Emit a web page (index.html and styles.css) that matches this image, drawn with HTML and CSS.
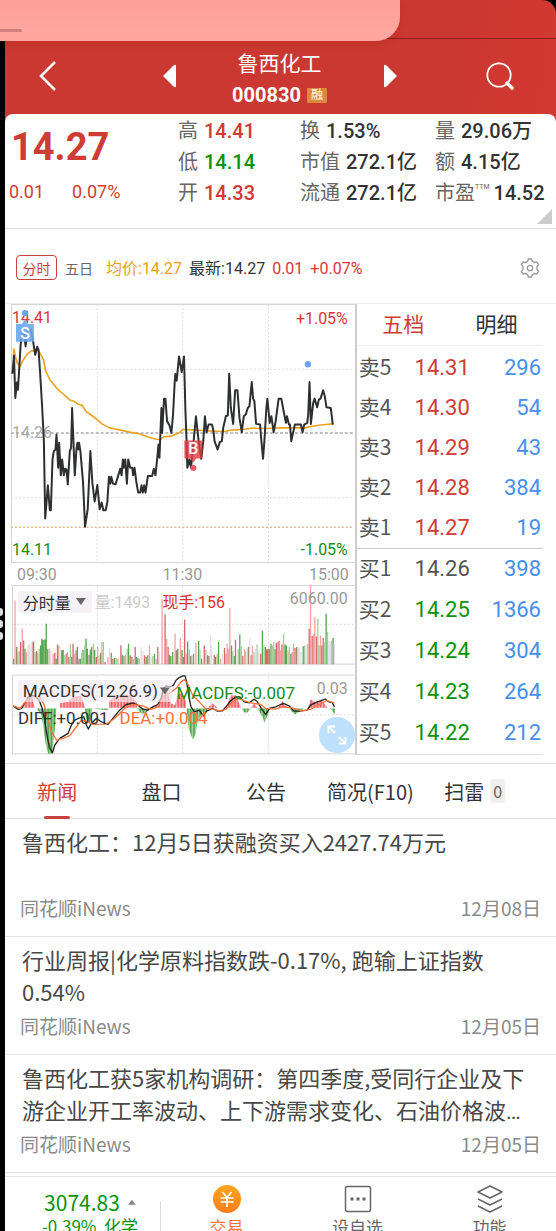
FILE: index.html
```html
<!DOCTYPE html>
<html lang="zh-CN">
<head>
<meta charset="utf-8">
<meta name="viewport" content="width=device-width, initial-scale=1">
<title>鲁西化工 000830</title>
<link rel="stylesheet" href="styles.css">
</head>
<body>
<div class="float-panel"><span class="grip"></span></div>
<div class="edge-handle"><i></i><i></i><i></i></div>
<div class="app">
  <header class="header">
    <button class="icon-btn" aria-label="返回"><svg width="18" height="30" viewBox="0 0 18 30"><path d="M16 1 2 15l14 14" fill="none" stroke="#fff" stroke-width="2.5"/></svg></button>
    <div class="switcher">
      <button class="icon-btn" aria-label="上一只"><svg width="14" height="22" viewBox="0 0 14 22"><path d="M13 0v22h-2L0 11 11 0z" fill="#fff"/></svg></button>
      <div class="heading">
        <h1>鲁西化工</h1>
        <div class="code">000830<span class="tag">融</span></div>
      </div>
      <button class="icon-btn" aria-label="下一只"><svg width="14" height="22" viewBox="0 0 14 22"><path d="M1 0v22h2l11-11L3 0z" fill="#fff"/></svg></button>
    </div>
    <button class="icon-btn" aria-label="搜索"><svg width="28" height="28" viewBox="0 0 28 28" fill="none" stroke="#fff"><circle cx="13" cy="13" r="11.7" stroke-width="1.8"/><path d="m21 21 5 5" stroke-width="3.4" stroke-linecap="round"/></svg></button>
  </header>

  <main class="card">
    <section class="quote">
      <div class="price">
        <strong>14.27</strong>
        <div class="change"><span>0.01</span><span>0.07%</span></div>
      </div>
      <dl class="stats">
        <div><dt>高</dt><dd class="red">14.41</dd></div>
        <div><dt>换</dt><dd>1.53%</dd></div>
        <div><dt>量</dt><dd>29.06万</dd></div>
        <div><dt>低</dt><dd class="green">14.14</dd></div>
        <div><dt>市值</dt><dd>272.1亿</dd></div>
        <div><dt>额</dt><dd>4.15亿</dd></div>
        <div><dt>开</dt><dd class="red">14.33</dd></div>
        <div><dt>流通</dt><dd>272.1亿</dd></div>
        <div><dt>市盈<sup>TTM</sup></dt><dd>14.52</dd></div>
      </dl>
      <span class="corner"></span>
    </section>

    <section class="toolbar">
      <button class="period active">分时</button>
      <button class="period">五日</button>
      <p class="legend"><span class="avg">均价:14.27</span><span>最新:14.27</span><span class="bright">0.01</span><span class="bright">+0.07%</span></p>
      <button class="icon-btn gear" aria-label="设置"><svg width="20" height="20" viewBox="0 0 20 20" fill="none" stroke="#999" stroke-width="1.3" stroke-linejoin="round"><path d="M8.3 1h3.4l.6 2.4 2 1.2 2.5-.8 1.8 2.9-1.6 2v2.6l1.6 2-1.8 2.9-2.5-.8-2 1.2-.6 2.4H8.3l-.6-2.4-2-1.2-2.5.8-1.8-2.9 1.6-2V8.700l-1.600-2 1.800-2.900 2.500.8 2-1.200z"/><circle cx="10" cy="10" r="2.700"/></svg></button>
    </section>

    <section class="market">
      <div class="chart">
        <svg viewBox="0 0 345 453" role="img" aria-label="分时走势">
          <defs>
            <pattern id="red-bars" width="4.400" height="10" patternUnits="userSpaceOnUse"><rect width="3.200" height="10" fill="#f4555c"/></pattern>
            <pattern id="green-bars" width="4.400" height="10" patternUnits="userSpaceOnUse"><rect width="3.200" height="10" fill="#43a33f"/></pattern>
          </defs>
          <g class="frame"><path d="M.5 259.500V.5H345M.5 259.500H345M1.500 282.500H345M1.500 282.500V361.500H345M1.500 372.500H345M1.500 372.500V451.500H345"/></g>
          <g class="grid"><path d="M86.500 0V259M172.500 0V259M258.500 0V259M0 65.500H344M0 194.500H344M86.500 283V361M172.500 283V361M258.500 283V361M2 321.500H344M86.500 373V451M172.500 373V451M258.500 373V451M2 412.500H344"/></g>
          <path class="mid" d="M0 129.500H344"/>
          <path class="low" d="M0 224H344"/>
          <g class="axis">
            <text class="up" x="1" y="19">14.41</text><text class="up" x="338" y="20" text-anchor="end">+1.05%</text>
            <text x="1" y="135" class="faint">14.26</text>
            <text class="down" x="1" y="252">14.11</text><text class="down" x="338" y="252" text-anchor="end">-1.05%</text>
            <text x="6" y="277">09:30</text><text x="172" y="277" text-anchor="middle">11:30</text><text x="339" y="277" text-anchor="end">15:00</text>
          </g>
          <circle cx="14" cy="9" r="3" fill="#6aa2ec"/>
          <g transform="translate(-11 -9) scale(.33333)">
            <polyline class="avg-line" points="40,190 42,163 46,185 52,205 60,215 70,195 82,178 95,168 105,168 113,165 122,178 131,195 137,228 150,255 170,280 190,298 210,316 222,320 235,328 248,333 260,352 275,362 293,375 307,388 330,400 360,406 390,413 415,417 440,425 460,432 482,436 492,427 515,425 540,415 550,405 580,406 610,408 640,410 680,411 692,407 730,405 760,401 800,402 850,400 920,400 930,397 960,392 980,390 1003,388"/>
            <polyline class="price-line" points="37,237 42,183 46,310 51,263 54,285 62,150 68,100 73,120 77,155 82,108 88,104 93,104 98,130 106,180 112,156 116,165 121,240 127,340 132,440 136,673 144,573 150,648 153,648 158,495 162,470 167,465 170,420 175,520 178,445 183,543 187,495 192,543 196,523 200,525 204,570 210,470 214,460 217,340 221,440 225,543 230,465 233,445 236,465 238,445 242,470 250,565 256,698 264,645 272,470 278,565 285,622 293,572 300,645 306,625 311,648 318,648 323,625 328,547 332,568 335,547 340,568 348,570 356,543 362,523 366,543 370,495 373,520 377,495 382,568 386,495 392,520 398,520 401,543 405,520 410,560 416,595 422,595 426,573 430,595 434,573 438,595 445,545 458,545 463,523 468,543 474,485 477,450 480,490 486,340 488,415 494,312 498,312 503,380 510,392 516,415 521,360 526,262 528,238 532,258 539,185 547,232 554,185 558,340 562,450 564,520 570,495 575,520 582,450 590,365 598,440 606,493 612,440 617,365 622,413 628,390 638,390 642,405 646,440 655,465 662,443 668,440 672,400 680,365 686,362 690,237 695,340 702,388 708,287 715,287 721,370 728,413 734,365 740,360 746,340 751,335 758,262 762,312 766,320 771,388 783,390 787,440 792,493 796,440 802,340 805,312 812,385 817,365 824,413 830,380 839,312 847,312 854,350 861,385 864,365 870,390 873,390 877,440 883,412 888,390 906,390 911,413 916,390 925,385 928,360 932,262 936,388 943,325 947,312 955,338 960,315 965,312 973,287 978,305 983,338 996,340 1002,390"/>
          </g>
          <path d="M5 20h6l3-5 3 5h6v18H5z" fill="#6aa8f0" fill-opacity=".9"/>
          <text class="mark" x="14" y="35" text-anchor="middle">S</text>
          <path d="M174 137h18v18h-6l-3 4-3-4h-6z" fill="#e33b40" fill-opacity=".82"/>
          <text class="mark" x="183" y="151" text-anchor="middle">B</text>
          <circle cx="183" cy="164.500" r="3" fill="#e9555b"/>
          <circle cx="298" cy="60.500" r="3.200" fill="#6aa2ec"/>

          <g class="vol" transform="translate(-11 276) scale(.33333)">
            <path stroke="#d9666b" d="M41 257V240M62 257V190M71 257V185M165 257V222M199 257V225M220 257V195M238 257V240M276 257V205M290 257V235M316 257V250M340 257V240M364 257V200M392 257V230M407 257V205M435 257V230M475 257V205M497 257V107M506 257V205M556 257V122M615 257V200M625 257V230M676 257V208M709 257V183M731 257V232M756 257V230M785 257V225M803 257V212M807 257V212M832 257V192M840 257V187M849 257V197M888 257V208M931 257V150M940 257V172M953 257V173M973 257V178"/>
            <path stroke="#f3a3a6" d="M45 257V65M58 257V217M67 257V150M80 257V220M97 257V190M114 257V222M160 257V225M177 257V200M203 257V220M225 257V225M294 257V205M311 257V190M325 257V235M355 257V240M378 257V228M420 257V240M450 257V200M470 257V240M488 257V60M502 257V180M527 257V165M543 257V178M561 257V225M590 257V192M654 257V225M664 257V240M680 257V225M684 257V195M688 257V210M692 257V87M736 257V212M760 257V200M836 257V190M845 257V215M867 257V215M880 257V220M884 257V195M927 257V195M935 257V18M944 257V165M948 257V115M965 257V170"/>
            <path stroke="#55a852" d="M75 257V210M101 257V188M122 257V200M126 257V180M130 257V184M135 257V182M139 257V135M169 257V240M186 257V215M190 257V213M216 257V235M233 257V205M242 257V240M250 257V213M259 257V180M263 257V210M272 257V213M285 257V213M345 257V238M368 257V228M387 257V195M411 257V235M440 257V235M465 257V225M514 257V232M520 257V220M535 257V210M548 257V215M565 257V188M598 257V187M607 257V240M649 257V235M658 257V190M697 257V200M705 257V232M722 257V167M790 257V155M799 257V205M816 257V195M828 257V212M858 257V197M862 257V200M876 257V225M913 257V203M982 257V105M1003 257V178"/>
            <path stroke="#a5cf9c" d="M54 257V220M106 257V220M118 257V210M148 257V210M195 257V230M212 257V195M246 257V222M255 257V200M281 257V195M298 257V230M307 257V190M350 257V238M383 257V210M402 257V240M460 257V232M570 257V213M578 257V230M602 257V213M620 257V213M701 257V218M718 257V210M727 257V203M740 257V218M765 257V220M774 257V197M795 257V200M820 257V200M824 257V190M854 257V165M871 257V205M917 257V200M957 257V120M961 257V200M978 257V190M986 257V160M998 257V185"/>
            <path stroke="#e2e0e2" d="M84 257V200M88 257V195M93 257V200M153 257V215M181 257V213M330 257V207M425 257V205M430 257V218M455 257V235M480 257V218M594 257V228M633 257V170M637 257V200M670 257V225M714 257V215M744 257V210M752 257V178M769 257V212M779 257V215M897 257V205M901 257V208M906 257V220M922 257V200M990 257V185M994 257V190M1007 257V195"/>
            <path stroke="#a5886a" d="M50 257V205M110 257V217M143 257V212M173 257V197M207 257V235M229 257V215M268 257V228M303 257V222M335 257V222M373 257V232M397 257V235M415 257V238M445 257V230M510 257V228M531 257V215M552 257V235M574 257V232M583 257V225M629 257V232M645 257V228M748 257V205M811 257V210M893 257V205M969 257V200"/>
          </g>

          <g transform="translate(-11 276) scale(.33333)">
            <path fill="url(#red-bars)" d="M68 388 80 362 95 350 105 388ZM180 388V374L205 370 220 354 245 352 256 388ZM328 388V370L345 352 370 350 395 350 412 372V388ZM455 388 475 378 490 345 502 335 515 375 527 380 535 345 548 345 560 370V388ZM625 388 640 375 655 388ZM680 388 695 350 710 352 726 388ZM755 388 765 375 775 388ZM838 388 850 368 866 388ZM928 388 935 362 950 372 970 366 986 388Z"/>
            <path fill="url(#green-bars)" d="M110 390 125 410 137 495 145 526 157 526 165 450 170 390ZM255 390 262 432 272 430 277 390ZM280 390 300 393 325 395V390ZM412 390 425 405 440 404 450 390ZM562 390 568 450 580 484 588 470 595 430 610 400 618 408 625 390ZM728 390 735 402 745 402 755 390ZM775 390 790 415 797 433 810 400V390ZM870 390 888 408 905 397 915 390ZM992 390 1000 395 1008 410 1010 390Z"/>
            <polyline class="diff-line" points="40,383 55,393 65,390 75,372 85,355 95,350 105,352 118,365 127,390 135,430 143,480 150,510 158,523 165,500 180,480 205,465 215,440 225,425 240,418 252,415 260,440 266,452 275,435 290,420 305,430 325,438 340,420 360,395 380,378 400,374 415,380 430,392 445,395 460,385 475,378 485,360 492,330 500,322 512,325 522,320 530,305 540,297 550,292 557,292 562,310 568,350 575,385 585,400 592,398 600,395 612,412 622,398 640,390 655,398 670,397 680,385 692,370 700,362 712,355 722,355 735,370 750,373 765,362 775,370 788,392 800,408 812,390 830,385 845,378 855,375 870,382 885,398 900,398 925,395 935,380 955,370 980,362 990,370 1000,372 1007,385"/>
            <polyline class="dea-line" points="40,382 60,390 80,365 95,355 120,355 133,380 143,420 155,460 170,485 190,480 210,472 230,445 245,425 262,430 280,438 320,437 345,420 375,390 400,378 430,382 455,393 475,385 490,360 510,345 530,330 545,310 555,303 565,315 580,350 600,370 618,390 640,392 660,397 680,393 700,370 720,360 750,372 785,378 800,390 830,392 850,385 880,388 910,397 935,393 960,378 985,366 1007,374"/>
          </g>
          <g class="axis">
            <text x="84" y="305" class="light">量:1493</text>
            <text x="152" y="305" class="up">现手:156</text>
            <text x="338" y="301" text-anchor="end">6060.00</text>
            <text x="166" y="396" class="down wide">MACDFS:-0.007</text>
            <text x="338" y="391" text-anchor="end">0.03</text>
            <text x="7" y="422" class="dark wide">DIFF:+0.001</text>
            <text x="109" y="422" class="orange wide">DEA:+0.004</text>
          </g>
        </svg>
        <button class="indicator volume">分时量<span class="caret"></span></button>
        <button class="indicator macd">MACDFS(12,26.9)<span class="caret"></span></button>
        <button class="expand" aria-label="全屏"><svg width="20" height="20" viewBox="0 0 20 20" fill="none" stroke="#fff" stroke-width="1.800"><path d="M8 8 2 2M1.500 8V1.500H8M12 12l6 6M12 18.500h6.500V12"/></svg></button>
      </div>

      <div class="book">
        <nav class="book-tabs"><button class="on">五档</button><button>明细</button></nav>
        <table>
          <tbody class="sell">
            <tr><th scope="row">卖5</th><td>14.31</td><td>296</td></tr>
            <tr><th scope="row">卖4</th><td>14.30</td><td>54</td></tr>
            <tr><th scope="row">卖3</th><td>14.29</td><td>43</td></tr>
            <tr><th scope="row">卖2</th><td>14.28</td><td>384</td></tr>
            <tr><th scope="row">卖1</th><td>14.27</td><td>19</td></tr>
          </tbody>
          <tbody class="buy">
            <tr><th scope="row">买1</th><td class="flat">14.26</td><td>398</td></tr>
            <tr><th scope="row">买2</th><td>14.25</td><td>1366</td></tr>
            <tr><th scope="row">买3</th><td>14.24</td><td>304</td></tr>
            <tr><th scope="row">买4</th><td>14.23</td><td>264</td></tr>
            <tr><th scope="row">买5</th><td>14.22</td><td>212</td></tr>
          </tbody>
        </table>
      </div>
    </section>

    <nav class="tabs">
      <a href="#news" class="current">新闻</a>
      <a href="#board">盘口</a>
      <a href="#notice">公告</a>
      <a href="#f10">简况(F10)</a>
      <a href="#risk">扫雷<span class="count">0</span></a>
    </nav>

    <section class="news" id="news">
      <article><h2>鲁西化工：12月5日获融资买入2427.74万元</h2><footer><span>同花顺iNews</span><time>12月08日</time></footer></article>
      <article><h2>行业周报|化学原料指数跌-0.17%, 跑输上证指数0.54%</h2><footer><span>同花顺iNews</span><time>12月05日</time></footer></article>
      <article><h2>鲁西化工获5家机构调研：第四季度,受同行企业及下游企业开工率波动、上下游需求变化、石油价格波<span class="more">…</span></h2><footer><span>同花顺iNews</span><time>12月05日</time></footer></article>
    </section>
  </main>

  <nav class="bottom">
    <button class="index"><span class="index-value">3074.83<i></i></span><span class="index-sub">-0.39%&nbsp; 化学</span></button>
    <button class="action trade"><svg width="28" height="28" viewBox="0 0 28 28"><defs><linearGradient id="coin" x2="0" y2="1"><stop stop-color="#ffa61f"/><stop offset="1" stop-color="#fb7d1c"/></linearGradient></defs><circle cx="14" cy="14" r="14" fill="url(#coin)"/><path d="m9.500 7 4.500 5.500L18.500 7M7.500 13h13M7.500 17h13M14 13v9" fill="none" stroke="#fff" stroke-width="1.700"/></svg>交易</button>
    <button class="action"><svg width="28" height="28" viewBox="0 0 28 28"><rect x="1.500" y="1.500" width="25" height="25" rx="2" fill="none" stroke="#666" stroke-width="1.500"/><path d="M6.500 12.500h3v3h-3zM12.500 12.500h3v3h-3zM18.500 12.500h3v3h-3z" fill="#666"/></svg>设自选</button>
    <button class="action"><svg width="28" height="28" viewBox="0 0 28 28" fill="none" stroke="#666" stroke-width="1.500" stroke-linejoin="round"><path d="m14 1 12 6-12 6L2 7zM2 14l12 6 12-6M2 21l12 6 12-6"/></svg>功能</button>
  </nav>
</div>
</body>
</html>
```
FILE: styles.css
```css
* { box-sizing: border-box; }
html { height: 100%; }
body {
  margin: 0;
  height: 100%;
  overflow: hidden;
  background: #000;
  color: #333;
  font-family: Roboto, "Noto Sans CJK SC", sans-serif;
}
button {
  padding: 0;
  border: 0;
  background: none;
  color: inherit;
  font: inherit;
  cursor: pointer;
}
svg { display: block; }
h1, h2, p, dl, dd { margin: 0; font-weight: 400; }

.app {
  min-height: 100%;
  margin-left: 5px;
  background: linear-gradient(100deg, #cb3831 0 60%, #d73a32 85%) #d03831;
  border-top-right-radius: 14px;
}

/* Floating layers over the page */
.float-panel {
  position: absolute;
  top: 0;
  left: 0;
  width: 72%;
  height: 41px;
  background: linear-gradient(#ff9f97, #ffa89f);
  border-bottom-right-radius: 24px;
  box-shadow: 0 2px 8px rgba(120, 20, 16, .15);
}
.grip {
  position: absolute;
  left: 0;
  bottom: 9px;
  width: 22px;
  height: 3px;
  border-radius: 0 2px 2px 0;
  background: #d0817b;
}
.edge-handle {
  position: absolute;
  left: 0;
  top: 608px;
  display: grid;
  gap: 4px;
}
.edge-handle i {
  width: 3px;
  height: 8px;
  border-radius: 0 4px 4px 0;
  background: #ddd;
}

.header {
  display: flex;
  align-items: center;
  justify-content: space-between;
  height: 114px;
  padding: 38px 42px 0 34px;
  color: #fff;
  background: linear-gradient(#8e1d18, #8e1d18) 0 38px / 100% 1px no-repeat;
}
.icon-btn { display: block; }
.switcher {
  display: flex;
  align-items: center;
  justify-content: space-between;
  width: 234px;
  margin-left: 16px;
}
.heading { padding-top: 8px; text-align: center; }
.heading h1 { font-size: 21px; line-height: 30px; }
.code {
  display: flex;
  align-items: center;
  gap: 6px;
  font-size: 20px;
  line-height: 32px;
  font-weight: 700;
}
.tag {
  padding: 0 4px;
  background: #dd8744;
  border-radius: 1px;
  font-size: 12px;
  line-height: 15px;
  font-weight: 400;
}

.card {
  border-radius: 8px 8px 0 0;
  background: #fff;
}

.quote {
  position: relative;
  display: flex;
  height: 115px;
  padding-top: 2px;
  border-bottom: 1px solid #e2e2e2;
}
.price { width: 173px; color: #cf3c36; }
.price strong {
  display: block;
  padding: 4px 0 0 6px;
  font-size: 38px;
  line-height: 54px;
  font-weight: 700;
}
.change {
  display: flex;
  gap: 28px;
  padding-left: 4px;
  font-size: 18px;
  line-height: 36px;
}
.stats {
  flex: 1;
  display: grid;
  grid-template-columns: 122fr 135fr 121fr;
  grid-auto-rows: 31px;
  font-size: 20px;
  line-height: 30px;
  white-space: nowrap;
}
.stats div { display: flex; gap: 6px; }
.stats dt { color: #666; }
.stats dd { font-weight: 500; }
.stats div:last-child { gap: 4px; }
.stats sup { font-size: 7px; line-height: 8px; vertical-align: 11px; }
.red { color: #cf3c36; }
.green { color: #0b930b; }
.corner {
  position: absolute;
  right: 4px;
  bottom: 4px;
  width: 15px;
  height: 15px;
  background: #ccc;
  clip-path: polygon(100% 0, 100% 100%, 0 100%);
}

.toolbar {
  display: flex;
  align-items: center;
  height: 75px;
  padding: 3px 16px 0 11px;
  border-bottom: 1px solid #eee;
}
.period { margin-right: 13px; font-size: 14px; color: #666; }
.period.active {
  width: 41px;
  height: 25px;
  margin-right: 8px;
  border: 1px solid #c9413c;
  border-radius: 4px;
  color: #c9413c;
}
.legend {
  display: flex;
  gap: 7px;
  padding-top: 3px;
  font-size: 16px;
  line-height: 24px;
  white-space: nowrap;
}
.legend .avg { color: #e9a116; }
.legend .bright { color: #dc3436; }
.gear { margin-left: auto; }

.market {
  display: flex;
  padding: 0 13px 8px 6px;
  border-bottom: 1px solid #ddd;
}
.chart {
  position: relative;
  flex: 345;
  border-right: 2px solid #ccc;
}
.chart > svg { width: 100%; }
.frame { fill: none; stroke: #d4d4d4; }
.grid { fill: none; stroke: #ddd; stroke-dasharray: 2 2; }
.mid { stroke: #aaa; stroke-width: 1.5; stroke-dasharray: 3 2; }
.low { stroke: #dfba8b; stroke-width: 1.5; stroke-dasharray: 2 2; }
.axis { font-size: 16px; fill: #999; }
.axis .wide { font-size: 17px; }
.axis .up { fill: #d93338; }
.axis .down { fill: #168b16; }
.axis .faint { fill: #aaa; }
.axis .light { fill: #ccc; }
.axis .dark { fill: #333; }
.axis .orange { fill: #f4743b; }
.mark { font-size: 16px; fill: #fff; font-weight: 500; }
.price-line, .avg-line, .diff-line, .dea-line { fill: none; stroke-width: 6; stroke-linejoin: round; }
.price-line { stroke: #2d2f30; }
.avg-line { stroke: #e9a421; stroke-width: 5; }
.diff-line { stroke: #222; stroke-width: 4; }
.dea-line { stroke: #f4743b; stroke-width: 4; }
.vol { fill: none; stroke-width: 4; }
.indicator {
  position: absolute;
  left: 2%;
  display: flex;
  align-items: center;
  gap: 5px;
  height: 22px;
  padding: 0 6px 0 5px;
  border-radius: 2px;
  background: rgba(240, 235, 243, .65);
  font-size: 16px;
  white-space: nowrap;
}
.volume { top: 63.5%; }
.macd { top: 83.3%; gap: 2px; padding-right: 2px; font-size: 17px; }
.caret {
  width: 10px;
  height: 7px;
  background: #666;
  clip-path: polygon(0 0, 100% 0, 50% 100%);
}
.expand {
  position: absolute;
  right: 0;
  bottom: 2px;
  display: grid;
  place-items: center;
  width: 36px;
  height: 36px;
  border-radius: 50%;
  background: #bfe1fe;
}

.book { flex: 187; border-bottom: 1px solid #ddd; }
.book-tabs {
  display: grid;
  grid-template-columns: 1fr 1fr;
  height: 42px;
  padding-bottom: 4px;
  border-bottom: 1px solid #eee;
  font-size: 21px;
}
.book-tabs .on { color: #cf3c36; }
.book table {
  width: 100%;
  margin-top: 2px;
  border-collapse: collapse;
  font-size: 22px;
  line-height: 30px;
}
.book tr { height: 41px; }
.sell tr { height: 40px; }
.book th, .book td { padding: 0 2px; font-weight: 400; text-align: left; }
.book th {
  width: 30%;
  padding-bottom: 4px;
  color: #555;
  font-family: "Noto Sans CJK SC", sans-serif;
  font-size: 21px;
}
.sell td { color: #cf3c36; }
.buy { border-top: 1px solid #ccc; }
.buy td { color: #0b930b; }
.buy .flat { color: #555; }
.book td:last-child { color: #468fee; text-align: right; }

.tabs {
  display: grid;
  grid-template-columns: repeat(5, 1fr);
  height: 55px;
  padding-right: 29px;
  border-bottom: 1px solid #ddd;
  font-family: "Noto Sans CJK SC", sans-serif;
  font-size: 20px;
}
.tabs a {
  position: relative;
  display: flex;
  align-items: center;
  justify-content: center;
  color: #333;
  text-decoration: none;
  white-space: nowrap;
}
.tabs .current { color: #cf3c36; }
.tabs .current::after {
  content: "";
  position: absolute;
  bottom: -1px;
  width: 26px;
  height: 3px;
  border-radius: 2px;
  background: #c9413c;
}
.count {
  margin-left: 6px;
  padding: 0 3px;
  border-radius: 3px;
  background: #efefef;
  color: #666;
  font-size: 16px;
  line-height: 24px;
}

.news { font-family: "Noto Sans CJK SC", sans-serif; }
.news article {
  padding: 6px 15px 9px;
  border-bottom: 1px solid #e4e4e4;
}
.news h2 {
  min-height: 64px;
  padding: 0 12px 0 2px;
  color: #484848;
  font-size: 22px;
  line-height: 32px;
}
.more { font-family: Roboto, sans-serif; line-height: 1; }
.news footer {
  display: flex;
  justify-content: space-between;
  color: #8a8a8a;
  font-size: 19px;
  line-height: 38px;
}

.bottom {
  display: grid;
  grid-template-columns: 156fr 131fr 131fr 133fr;
  padding-top: 3px;
  background: #fff;
  font-family: "Noto Sans CJK SC", sans-serif;
}
.bottom button {
  border-top: 1px solid #e6e6e6;
  height: 72px;
}
.index {
  display: flex;
  flex-direction: column;
  align-items: center;
  padding: 13px 0 0 14px;
  color: #0b930b;
  background: linear-gradient(#ddd, #ddd) 100% 24px / 1px 100% no-repeat;
}
.index-value { display: flex; align-items: center; gap: 8px; font-size: 21px; line-height: 24px; }
.index-value i {
  width: 8px;
  height: 5px;
  background: #888;
  clip-path: polygon(50% 0, 100% 100%, 0 100%);
}
.index-sub { font-size: 17px; line-height: 24px; white-space: nowrap; }
.action {
  display: flex;
  flex-direction: column;
  align-items: center;
  padding-top: 8px;
  color: #666;
  font-size: 17px;
  line-height: 28px;
}
.trade { color: #f4743b; }
```
